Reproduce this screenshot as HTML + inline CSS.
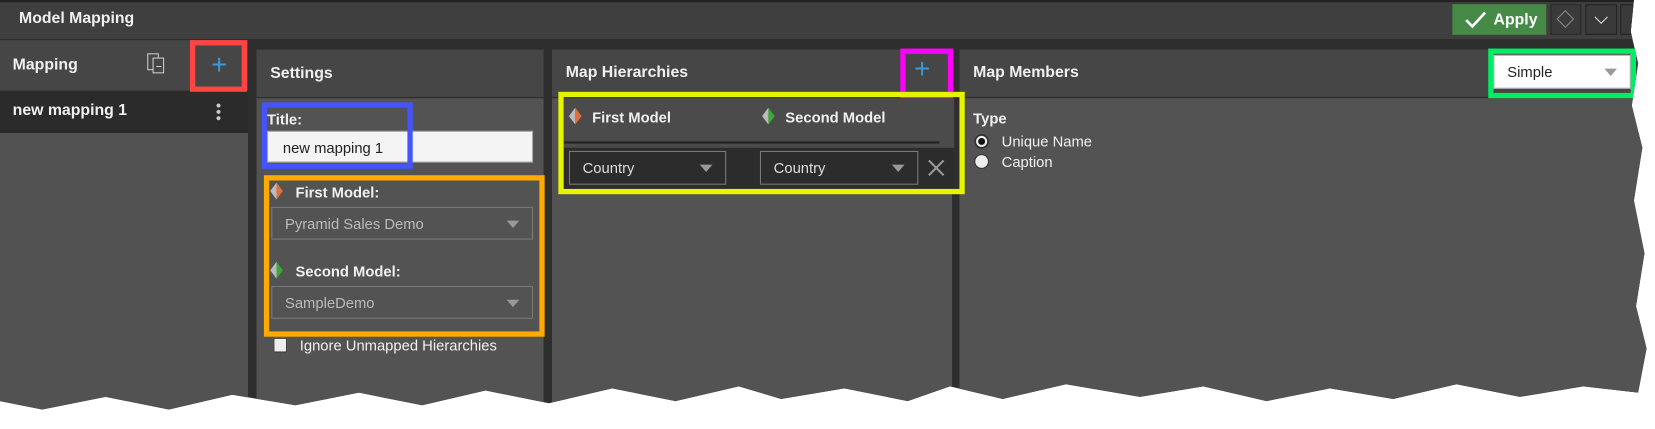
<!DOCTYPE html>
<html><head><style>
*{margin:0;padding:0;box-sizing:border-box}
body{width:1655px;height:405px;background:#fff;position:relative;overflow:hidden;font-family:"Liberation Sans",sans-serif;color:#f0f0f0}
.abs{position:absolute}
#wrap{position:absolute;left:0;top:0;width:1568px;height:384px;transform:scale(1.0555);transform-origin:0 0}
#app{position:absolute;left:0;top:0;width:1560px;height:400px;background:#2e2e2e;
clip-path:polygon(0 0,1548px 0,1545px 30px,1552px 60px,1546px 100px,1556px 140px,1548px 190px,1558px 240px,1550px 290px,1560px 330px,1552px 372px,1500px 366px,1440px 376px,1380px 364px,1320px 378px,1260px 368px,1200px 380px,1140px 366px,1080px 376px,1010px 364px,950px 378px,900px 366px,860px 380px,800px 368px,740px 378px,700px 366px,640px 380px,580px 368px,520px 382px,460px 370px,400px 384px,340px 372px,280px 384px,220px 374px,160px 388px,100px 376px,40px 388px,0 380px)}
.b{font-weight:bold}
.box{position:absolute;border:5px solid}
.dd{position:absolute;border:1px solid #7a7a7a;font-size:14px;padding-left:12px;display:flex;align-items:center}
.tri{position:absolute;right:12px;top:50%;margin-top:-3px;width:0;height:0;border-left:6px solid transparent;border-right:6px solid transparent;border-top:7px solid #999}
</style></head><body>
<div id="wrap">
<div id="app">
 <div class="abs" style="left:0;top:0;width:1560px;height:37px;background:#3f3f3f;border-top:2px solid #222"></div>
 <div class="abs b" style="left:18px;top:9px;font-size:15px">Model Mapping</div>
 <div class="abs" style="left:1376px;top:4px;width:89px;height:29px;background:#458a47"></div>
 <svg class="abs" style="left:1386px;top:10px" width="24" height="18"><path d="M3 9l6 6L21 2" stroke="#fff" stroke-width="2.5" fill="none"/></svg>
 <div class="abs b" style="left:1415px;top:10px;font-size:15px;color:#fff">Apply</div>
 <div class="abs" style="left:1469px;top:4px;width:29px;height:29px;border:1px solid #2a2a2a;background:#3a3a3a"></div>
 <div class="abs" style="left:1477px;top:12px;width:12px;height:12px;border:1px solid #888;transform:rotate(45deg)"></div>
 <div class="abs" style="left:1502px;top:4px;width:30px;height:29px;border:1px solid #222;background:#3a3a3a"></div>
 <svg class="abs" style="left:1510px;top:14px" width="14" height="10"><path d="M1 2l6 6 6-6" stroke="#ddd" fill="none"/></svg>
 <div class="abs" style="left:1535px;top:4px;width:20px;height:29px;border:1px solid #222;background:#3a3a3a"></div>

 <div class="abs" style="left:0;top:38px;width:235px;height:48px;background:#464646"></div>
 <div class="abs b" style="left:12px;top:53px;font-size:15px">Mapping</div>
 <svg class="abs" style="left:137px;top:49px" width="22" height="22"><rect x="3" y="2" width="10" height="15" fill="none" stroke="#ccc"/><rect x="8" y="6" width="10" height="14" fill="#464646" stroke="#ccc"/><path d="M11 14h5" stroke="#ccc"/></svg>
 <div class="abs" style="left:0;top:86px;width:235px;height:40px;background:#2b2b2b"></div>
 <div class="abs b" style="left:12px;top:96px;font-size:15px">new mapping 1</div>
 <div class="abs" style="left:205px;top:97px;width:4px;height:18px;background:radial-gradient(circle,#ccc 1.8px,transparent 2px) 0 0/4px 6px"></div>
 <div class="abs" style="left:0;top:126px;width:235px;height:280px;background:#525252"></div>

 <div class="abs" style="left:243px;top:47px;width:272px;height:46px;background:#464646;border-bottom:1px solid #2a2a2a"></div>
 <div class="abs b" style="left:256px;top:61px;font-size:15px">Settings</div>
 <div class="abs" style="left:243px;top:93px;width:272px;height:310px;background:#535353"></div>
 <div class="abs b" style="left:253px;top:105px;font-size:14px">Title:</div>
 <div class="abs" style="left:253px;top:124px;width:252px;height:30px;background:#f4f4f4;border:1px solid #aaa;color:#222;font-size:14px;padding:7px 0 0 14px">new mapping 1</div>
 <svg class="abs" style="left:254px;top:172px" width="16" height="18"><path d="M8 1L2 9l6 8z" fill="#bbb"/><path d="M8 1l6 8-6 8z" fill="#e0703a"/></svg>
 <div class="abs b" style="left:280px;top:174px;font-size:14px">First Model:</div>
 <div class="dd" style="left:257px;top:196px;width:248px;height:31px;color:#bbb">Pyramid Sales Demo<div class="tri"></div></div>
 <svg class="abs" style="left:254px;top:247px" width="16" height="18"><path d="M8 1L2 9l6 8z" fill="#bbb"/><path d="M8 1l6 8-6 8z" fill="#3aa83a"/></svg>
 <div class="abs b" style="left:280px;top:249px;font-size:14px">Second Model:</div>
 <div class="dd" style="left:257px;top:271px;width:248px;height:31px;color:#bbb">SampleDemo<div class="tri"></div></div>
 <div class="abs" style="left:259px;top:320px;width:13px;height:14px;background:#eee;border:1px solid #333"></div>
 <div class="abs" style="left:284px;top:319px;font-size:14px">Ignore Unmapped Hierarchies</div>

 <div class="abs" style="left:523px;top:47px;width:379px;height:46px;background:#464646;border-bottom:1px solid #2a2a2a"></div>
 <div class="abs b" style="left:536px;top:60px;font-size:15px">Map Hierarchies</div>
 <div class="abs" style="left:866px;top:50px;font-size:26px;color:#3a9ad9">+</div>
 <div class="abs" style="left:523px;top:93px;width:379px;height:310px;background:#535353"></div>
 <div class="abs" style="left:534px;top:93px;width:370px;height:86px;background:#2c2c2c"></div>
 <div class="abs" style="left:534px;top:93px;width:370px;height:47px;background:#4b4b4b"></div>
 <div class="abs" style="left:534px;top:134px;width:356px;height:2px;background:#222"></div>
 <svg class="abs" style="left:537px;top:101px" width="16" height="18"><path d="M8 1L2 9l6 8z" fill="#bbb"/><path d="M8 1l6 8-6 8z" fill="#e0703a"/></svg>
 <div class="abs b" style="left:561px;top:103px;font-size:14px">First Model</div>
 <svg class="abs" style="left:720px;top:101px" width="16" height="18"><path d="M8 1L2 9l6 8z" fill="#bbb"/><path d="M8 1l6 8-6 8z" fill="#3aa83a"/></svg>
 <div class="abs b" style="left:744px;top:103px;font-size:14px">Second Model</div>
 <div class="dd" style="left:539px;top:143px;width:149px;height:32px;color:#ddd">Country<div class="tri"></div></div>
 <div class="dd" style="left:720px;top:143px;width:150px;height:32px;color:#ddd">Country<div class="tri"></div></div>
 <svg class="abs" style="left:878px;top:150px" width="18" height="18"><path d="M2 2l14 14M16 2L2 16" stroke="#999" stroke-width="2"/></svg>

 <div class="abs" style="left:909px;top:47px;width:660px;height:46px;background:#464646;border-bottom:1px solid #2a2a2a"></div>
 <div class="abs b" style="left:922px;top:60px;font-size:15px">Map Members</div>
 <div class="abs" style="left:909px;top:93px;width:660px;height:310px;background:#535353"></div>
 <div class="dd" style="left:1415px;top:52px;width:130px;height:32px;background:#fff;color:#222;border-color:#bbb">Simple<div class="tri"></div></div>
 <div class="abs b" style="left:922px;top:104px;font-size:14px">Type</div>
 <div class="abs" style="left:923px;top:127px;width:14px;height:14px;border-radius:50%;background:radial-gradient(circle,#111 3px,#eee 3.5px,#eee 5px,#333 5.5px)"></div>
 <div class="abs" style="left:949px;top:126px;font-size:14px">Unique Name</div>
 <div class="abs" style="left:923px;top:146px;width:14px;height:14px;border-radius:50%;background:#eee;border:1px solid #333"></div>
 <div class="abs" style="left:949px;top:145px;font-size:14px">Caption</div>

 <div class="box" style="left:180px;top:38px;width:54px;height:49px;border-color:#ff4444"></div>
 <div class="abs" style="left:200px;top:46px;font-size:26px;color:#3a9ad9">+</div>
 <div class="box" style="left:248px;top:97px;width:143px;height:63px;border-color:#4455ff"></div>
 <div class="box" style="left:250px;top:166px;width:266px;height:153px;border-color:#ffaa00"></div>
 <div class="box" style="left:853px;top:46px;width:50px;height:47px;border-color:#ff00ff"></div>
 <div class="box" style="left:529px;top:87px;width:385px;height:97px;border-color:#e5f500"></div>
 <div class="box" style="left:1410px;top:46px;width:140px;height:47px;border-color:#00ee66"></div>
</div>
</div>
</body></html>
